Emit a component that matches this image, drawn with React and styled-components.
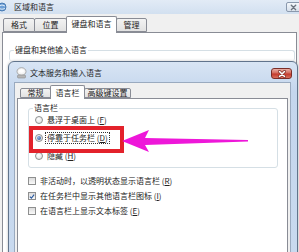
import React from "react";
import styled, { createGlobalStyle } from "styled-components";

const Global = createGlobalStyle`
  html, body { margin: 0; padding: 0; background: #f0f0f0; }
  body { font-family: "Noto Sans CJK SC", "Noto Sans", sans-serif; font-size: 8px; color: #222; }
  * { box-sizing: border-box; }
`;

const Window = styled.div`
  position: relative;
  width: 299px;
  height: 252px;
  overflow: hidden;
  background: #f0f0f0;
`;

const TitleBar = styled.div`
  display: flex;
  align-items: center;
  height: 14px;
  background: linear-gradient(#e2ebf6, #d2e0f0);
  line-height: 10px;
`;

const TitleText = styled.span`
  margin-left: 7px;
  color: #2a2a2a;
`;

const OuterClose = styled.div`
  margin-left: auto;
  margin-right: -2px;
  align-self: flex-start;
  margin-top: 2px;
  width: 15px;
  height: 10px;
  border: 1px solid #8a99ae;
  border-radius: 2px;
  background: linear-gradient(#f4f7fb, #d6e0ec);
  display: flex;
  align-items: center;
  justify-content: center;
`;

const TabStrip = styled.div`
  display: flex;
  align-items: flex-end;
  height: ${(p) => p.$h}px;
  margin-top: ${(p) => p.$mt}px;
  padding-left: ${(p) => p.$pl}px;
`;

const Tab = styled.div`
  position: relative;
  width: ${(p) => p.$w}px;
  height: ${(p) => (p.$active ? p.$h + 4 : p.$h)}px;
  margin-bottom: ${(p) => (p.$active ? -1 : 0)}px;
  margin-left: -1px;
  z-index: ${(p) => (p.$active ? 2 : 1)};
  border: 1px solid #898c95;
  border-bottom: ${(p) => (p.$active ? "none" : "1px solid #898c95")};
  border-radius: 2px 2px 0 0;
  background: ${(p) => (p.$active ? "#fff" : "linear-gradient(#f3f3f3, #e2e2e2)")};
  display: flex;
  align-items: ${(p) => (p.$active ? "flex-start" : "center")};
  padding-top: ${(p) => (p.$active ? 2 : 0)}px;
  justify-content: center;
  line-height: 10px;
  white-space: nowrap;
  &:first-child { margin-left: 0; }
`;

const Panel = styled.div`
  background: #fff;
  border: 1px solid #898c95;
  margin: ${(p) => p.$m};
  padding: ${(p) => p.$p};
  height: ${(p) => p.$h}px;
`;

const Group = styled.fieldset`
  margin: ${(p) => p.$m};
  padding: ${(p) => p.$p};
  border: 1px solid #d5dfe5;
  border-bottom: ${(p) => (p.$open ? "none" : "1px solid #d5dfe5")};
  border-radius: 3px;
  min-width: 0;
  width: ${(p) => p.$w}px;
  height: ${(p) => p.$h}px;
  position: relative;
`;

const Legend = styled.legend`
  padding: 0 1px;
  line-height: 10px;
  color: #222;
`;

const Dialog = styled.div`
  margin-left: 5px;
  width: 290px;
  border: 1px solid #61748c;
  border-radius: 6px 6px 0 0;
  background: linear-gradient(#d8e5f4, #c4d6ed 30px, #c9daef);
  padding: 0 6px 0 5px;
  box-shadow: 0 0 3px rgba(0, 0, 0, 0.25);
`;

const DialogTitle = styled.div`
  display: flex;
  align-items: flex-start;
  height: 20px;
  padding-top: 3px;
  line-height: 14px;
`;

const DialogTitleText = styled.span`
  margin-left: 3px;
  margin-top: 1px;
  color: #1e1e1e;
`;

const RedClose = styled.div`
  margin-left: auto;
  margin-right: -1px;
  margin-top: 3px;
  width: 21px;
  height: 11px;
  border: 1px solid #7b2d27;
  border-radius: 3px;
  background: linear-gradient(#eab0a6, #d46a5c 45%, #c43a2c 55%, #d9705e);
  display: flex;
  align-items: center;
  justify-content: center;
`;

const DialogBody = styled.div`
  background: #f0f0f0;
  border: 1px solid #9aaabf;
  padding: 1px 2px 0 2px;
  height: 200px;
`;

const Options = styled.div`
  display: flex;
  flex-direction: column;
  gap: ${(p) => p.$gap}px;
  margin: ${(p) => p.$m};
`;

const Row = styled.div`
  display: flex;
  align-items: center;
  height: 12px;
  gap: 2px;
  line-height: 10px;
  white-space: nowrap;
`;

const Radio = styled.span`
  width: 8px;
  height: 8px;
  border-radius: 50%;
  border: 1px solid #8e8f8f;
  background: radial-gradient(circle at 40% 35%, #fff, #dcdcdc);
  display: flex;
  align-items: center;
  justify-content: center;
  flex: none;
  &::after {
    content: "";
    display: ${(p) => (p.$on ? "block" : "none")};
    width: 4px;
    height: 4px;
    border-radius: 50%;
    background: radial-gradient(circle at 35% 35%, #8fb6e6, #1d4f8f);
  }
`;

const Check = styled.span`
  width: 8px;
  height: 8px;
  border: 1px solid #8e8f8f;
  background: linear-gradient(#dcdcdc, #fafafa);
  display: flex;
  align-items: center;
  justify-content: center;
  flex: none;
`;

const Label = styled.span`
  border: 1px dotted ${(p) => (p.$focus ? "#333" : "transparent")};
  padding: 0 1px;
`;

const Overlay = styled.svg`
  position: absolute;
  left: 0;
  top: 0;
  pointer-events: none;
`;

function GlobeIcon() {
  return (
    <svg width="10" height="10" viewBox="0 0 10 10" style={{ marginLeft: -3 }}>
      <circle cx="5" cy="5" r="4" fill="#6d9fd6" stroke="#3a6ea8" strokeWidth="0.8" />
      <path d="M2 4 Q5 2 8 4 M2 6.5 Q5 8 8 6.5" stroke="#e8f2fb" strokeWidth="0.9" fill="none" />
    </svg>
  );
}

function LangIcon() {
  return (
    <svg width="11" height="12" viewBox="0 0 11 12" style={{ marginLeft: 2, marginTop: 2 }}>
      <ellipse cx="5.5" cy="4.5" rx="4.5" ry="3.8" fill="#f4f4f4" stroke="#9a9a9a" strokeWidth="0.8" />
      <ellipse cx="5.5" cy="4" rx="2.5" ry="1.8" fill="#ffffff" />
      <rect x="1.5" y="8" width="8" height="3" rx="1" fill="#b7b7b7" stroke="#8a8a8a" strokeWidth="0.6" />
    </svg>
  );
}

function XMark({ color, stroke, size }) {
  return (
    <svg width={size} height={size} viewBox="0 0 8 8">
      <path d="M1.5 1.5 L6.5 6.5 M6.5 1.5 L1.5 6.5" stroke={stroke} strokeWidth="3" strokeLinecap="round" />
      <path d="M1.5 1.5 L6.5 6.5 M6.5 1.5 L1.5 6.5" stroke={color} strokeWidth="1.6" strokeLinecap="round" />
    </svg>
  );
}

function CheckMark() {
  return (
    <svg width="7" height="7" viewBox="0 0 7 7">
      <path d="M1 3.6 L2.8 5.4 L6 1.3" stroke="#2a5aa0" strokeWidth="1.3" fill="none" />
    </svg>
  );
}

const radios = [
  { t: "悬浮于桌面上", k: "F" },
  { t: "停靠于任务栏", k: "D", on: true },
  { t: "隐藏", k: "H" },
];

const checks = [
  { t: "非活动时，以透明状态显示语言栏", k: "R" },
  { t: "在任务栏中显示其他语言栏图标", k: "I", on: true },
  { t: "在语言栏上显示文本标签", k: "E" },
];

export default function App() {
  return (
    <>
      <Global />
      <Window>
        <TitleBar>
          <GlobeIcon />
          <TitleText>区域和语言</TitleText>
          <OuterClose>
            <XMark color="#6b7480" stroke="#e9eef4" size={7} />
          </OuterClose>
        </TitleBar>

        <TabStrip $h={16} $mt={2} $pl={3}>
          <Tab $w={32} $h={14}>格式</Tab>
          <Tab $w={33} $h={14}>位置</Tab>
          <Tab $w={51} $h={13} $active>键盘和语言</Tab>
          <Tab $w={31} $h={14}>管理</Tab>
        </TabStrip>

        <Panel $m="0 2px" $p="0" $h={230}>
          <Group $m="12px 1px 0 6px" $p="0 4px" $w={286} $h={16} $open>
            <Legend>键盘和其他输入语言</Legend>
          </Group>

          <Dialog>
            <DialogTitle>
              <LangIcon />
              <DialogTitleText>文本服务和输入语言</DialogTitleText>
              <RedClose>
                <XMark color="#ffffff" stroke="#7a2a22" size={8} />
              </RedClose>
            </DialogTitle>
            <DialogBody>
              <TabStrip $h={13} $mt={1} $pl={3}>
                <Tab $w={31} $h={10}>常规</Tab>
                <Tab $w={35} $h={10} $active>语言栏</Tab>
                <Tab $w={47} $h={10}>高级键设置</Tab>
              </TabStrip>
              <Panel $m="0" $p="4px 0 0 10px" $h={170}>
                <Group $m="0" $p="0 4px 3px 4px" $w={250} $h={65}>
                  <Legend>语言栏</Legend>
                  <Options $gap={6} $m="1px 0 0 2px">
                    {radios.map((r) => (
                      <Row key={r.k}>
                        <Radio $on={r.on} />
                        <Label $focus={r.on}>
                          {r.t} (<u>{r.k}</u>)
                        </Label>
                      </Row>
                    ))}
                  </Options>
                </Group>
                <Options $gap={3} $m="7px 0 0 0">
                  {checks.map((c) => (
                    <Row key={c.k}>
                      <Check>{c.on ? <CheckMark /> : null}</Check>
                      <Label>
                        {c.t} (<u>{c.k}</u>)
                      </Label>
                    </Row>
                  ))}
                </Options>
              </Panel>
            </DialogBody>
          </Dialog>
        </Panel>

        <Overlay width="299" height="252" viewBox="0 0 299 252">
          <rect x="31" y="128" width="91" height="23" fill="none" stroke="#e3222b" strokeWidth="4" />
          <polygon
            points="122,141 149,130 145,138 248,140 248,141.6 145,145 149,152"
            fill="#ee17d9"
          />
        </Overlay>
      </Window>
    </>
  );
}
